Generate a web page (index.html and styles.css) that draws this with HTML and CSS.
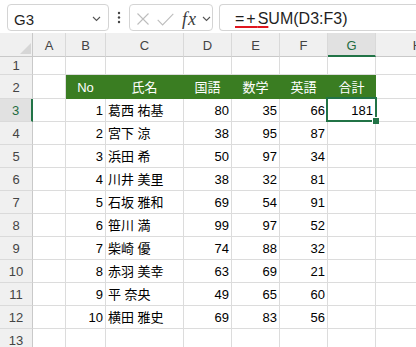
FILE: index.html
```html
<!DOCTYPE html>
<html lang="ja">
<head>
<meta charset="utf-8">
<title>Sheet</title>
<link rel="stylesheet" href="styles.css">
</head>
<body>
<div class="toolbar">
  <div class="box namebox">
    <span class="name">G3</span>
    <svg class="chev" width="9" height="6" viewBox="0 0 9 6"><path d="M1 1l3.5 3.5L8 1" fill="none" stroke="#555" stroke-width="1.1"/></svg>
  </div>
  <svg class="dots" width="4" height="14" viewBox="0 0 4 14"><circle cx="2" cy="2" r="1.2" fill="#444"/><circle cx="2" cy="6.5" r="1.2" fill="#444"/><circle cx="2" cy="11" r="1.2" fill="#444"/></svg>
  <div class="box fxbox">
    <svg class="ic-x" width="12" height="12" viewBox="0 0 12 12"><path d="M0.5 0.5L11.5 11.5M11.5 0.5L0.5 11.5" stroke="#bdbdbd" stroke-width="1.1" fill="none"/></svg>
    <svg class="ic-ok" width="17" height="13" viewBox="0 0 17 13"><path d="M0.7 6.8L5.6 12L16.3 0.8" stroke="#bdbdbd" stroke-width="1.1" fill="none"/></svg>
    <span class="fx">fx</span>
    <svg class="chev2" width="9" height="6" viewBox="0 0 9 6"><path d="M1 1l3.5 3.5L8 1" fill="none" stroke="#555" stroke-width="1.1"/></svg>
  </div>
  <div class="box formula"><span class="ul"><span class="op">=+</span>S</span>UM(D3:F3)</div>
</div>

<div class="sheet">
  <div class="row hdr">
    <div class="corner"><svg width="11" height="11" viewBox="0 0 11 11"><path d="M11 0V11H0Z" fill="#d6d6d6"/></svg></div>
    <div>A</div><div>B</div><div>C</div><div>D</div><div>E</div><div>F</div><div class="sel">G</div><div>H</div>
  </div>
  <div class="row r1"><div class="rh">1</div><div></div><div></div><div></div><div></div><div></div><div></div><div></div><div></div></div>
  <div class="row r2"><div class="rh">2</div><div></div><div class="g">No</div><div class="g">氏名</div><div class="g">国語</div><div class="g">数学</div><div class="g">英語</div><div class="g">合計</div><div></div></div>
  <div class="row"><div class="rh sel">3</div><div></div><div class="n">1</div><div class="t">葛西 祐基</div><div class="n">80</div><div class="n">35</div><div class="n">66</div><div class="n">181</div><div></div></div>
  <div class="row"><div class="rh">4</div><div></div><div class="n">2</div><div class="t">宮下 涼</div><div class="n">38</div><div class="n">95</div><div class="n">87</div><div></div><div></div></div>
  <div class="row"><div class="rh">5</div><div></div><div class="n">3</div><div class="t">浜田 希</div><div class="n">50</div><div class="n">97</div><div class="n">34</div><div></div><div></div></div>
  <div class="row"><div class="rh">6</div><div></div><div class="n">4</div><div class="t">川井 美里</div><div class="n">38</div><div class="n">32</div><div class="n">81</div><div></div><div></div></div>
  <div class="row"><div class="rh">7</div><div></div><div class="n">5</div><div class="t">石坂 雅和</div><div class="n">69</div><div class="n">54</div><div class="n">91</div><div></div><div></div></div>
  <div class="row"><div class="rh">8</div><div></div><div class="n">6</div><div class="t">笹川 満</div><div class="n">99</div><div class="n">97</div><div class="n">52</div><div></div><div></div></div>
  <div class="row"><div class="rh">9</div><div></div><div class="n">7</div><div class="t">柴崎 優</div><div class="n">74</div><div class="n">88</div><div class="n">32</div><div></div><div></div></div>
  <div class="row"><div class="rh">10</div><div></div><div class="n">8</div><div class="t">赤羽 美幸</div><div class="n">63</div><div class="n">69</div><div class="n">21</div><div></div><div></div></div>
  <div class="row"><div class="rh">11</div><div></div><div class="n">9</div><div class="t">平 奈央</div><div class="n">49</div><div class="n">65</div><div class="n">60</div><div></div><div></div></div>
  <div class="row"><div class="rh">12</div><div></div><div class="n">10</div><div class="t">横田 雅史</div><div class="n">69</div><div class="n">83</div><div class="n">56</div><div></div><div></div></div>
  <div class="row"><div class="rh">13</div><div></div><div></div><div></div><div></div><div></div><div></div><div></div><div></div></div>
  <div class="selbox"><span class="handle"></span></div>
</div>
</body>
</html>
```

FILE: styles.css
```css
* { box-sizing: border-box; }
html, body {
  margin: 0;
  padding: 0;
  width: 416px;
  height: 347px;
  overflow: hidden;
  background: #fff;
}
body {
  font-family: "Liberation Sans", "Noto Sans CJK JP", sans-serif;
  color: #000;
}

/* ---------- toolbar ---------- */
.toolbar {
  display: flex;
  align-items: flex-start;
  height: 33px;
  padding: 4px 0 0 7px;
  white-space: nowrap;
}
.box {
  flex: none;
  height: 27px;
  border: 1px solid #d4d4d4;
  border-radius: 4px;
  background: #fff;
  display: flex;
  align-items: center;
  padding-top: 3px;
}
.namebox {
  width: 102px;
  padding-left: 6px;
  padding-right: 7px;
  justify-content: space-between;
}
.name {
  font-size: 15px;
  color: #1f1f1f;
}
.dots {
  flex: none;
  margin: 7px 0 0 8px;
}
.fxbox {
  width: 84px;
  margin-left: 8px;
  padding-left: 7px;
}
.ic-ok { margin-left: 8px; }
.fx {
  margin-left: 8px;
  font-family: "Liberation Serif", serif;
  font-style: italic;
  font-size: 18px;
  letter-spacing: 1px;
  color: #3a3a3a;
  line-height: 18px;
}
.chev2 { margin-left: auto; margin-right: 1px; }
.formula {
  width: 240px;
  margin-left: 6px;
  padding-left: 15px;
  font-size: 16px;
  color: #1f1f1f;
  border-right: none;
  border-top-right-radius: 0;
  border-bottom-right-radius: 0;
}
.ul {
  text-decoration: underline;
  text-decoration-color: #e0161f;
  text-decoration-thickness: 2px;
  text-underline-offset: 2px;
}
.op { letter-spacing: 2px; }

/* ---------- sheet ---------- */
.sheet {
  position: relative;
}
.row {
  display: grid;
  grid-template-columns: 33px 33px 40px 78px 48px 48px 48px 48px 84px;
  height: 23px;
}
.row > div {
  border-right: 1px solid #dcdcdc;
  border-bottom: 1px solid #dcdcdc;
  font-size: 13px;
  line-height: 22px;
  padding: 1px 2px 0;
  overflow: hidden;
  white-space: nowrap;
}
.hdr { height: 24px; }
.hdr > div {
  background: #f0f0f0;
  border-bottom-color: #c9c9c9;
  border-right-color: #d9d9d9;
  text-align: center;
  color: #444;
  padding-top: 2px;
}
.hdr > .corner {
  display: flex;
  justify-content: flex-end;
  align-items: flex-end;
  padding: 0 1px 2px 0;
  border-right-color: #c9c9c9;
}
.hdr > .sel {
  background: #e1e1e1;
  border-bottom: 2px solid #217346;
  color: #1e6b40;
}
.row > .rh {
  background: #f0f0f0;
  text-align: center;
  color: #444;
  border-right-color: #c9c9c9;
  border-bottom-color: #dadada;
}
.row > .rh.sel {
  background: #e1e1e1;
  border-right: 2px solid #217346;
  color: #1e6b40;
}
.r1 { height: 18px; }
.r1 > div { line-height: 17px; padding-top: 0; }
.r2 { height: 24px; }
.r2 > div { padding-top: 2px; }
.row > .g {
  background: #3a7d22;
  border-color: #3a7d22;
  color: #fff;
  text-align: center;
}
.row > .n { text-align: right; }
.row > .t { text-align: left; }

.selbox {
  position: absolute;
  left: 326px;
  top: 64px;
  width: 51px;
  height: 25px;
  border: 2px solid #217346;
}
.handle {
  position: absolute;
  left: 44px;
  top: 18px;
  width: 7px;
  height: 7px;
  background: #217346;
  border-left: 1px solid #fff;
  border-top: 1px solid #fff;
}
```
